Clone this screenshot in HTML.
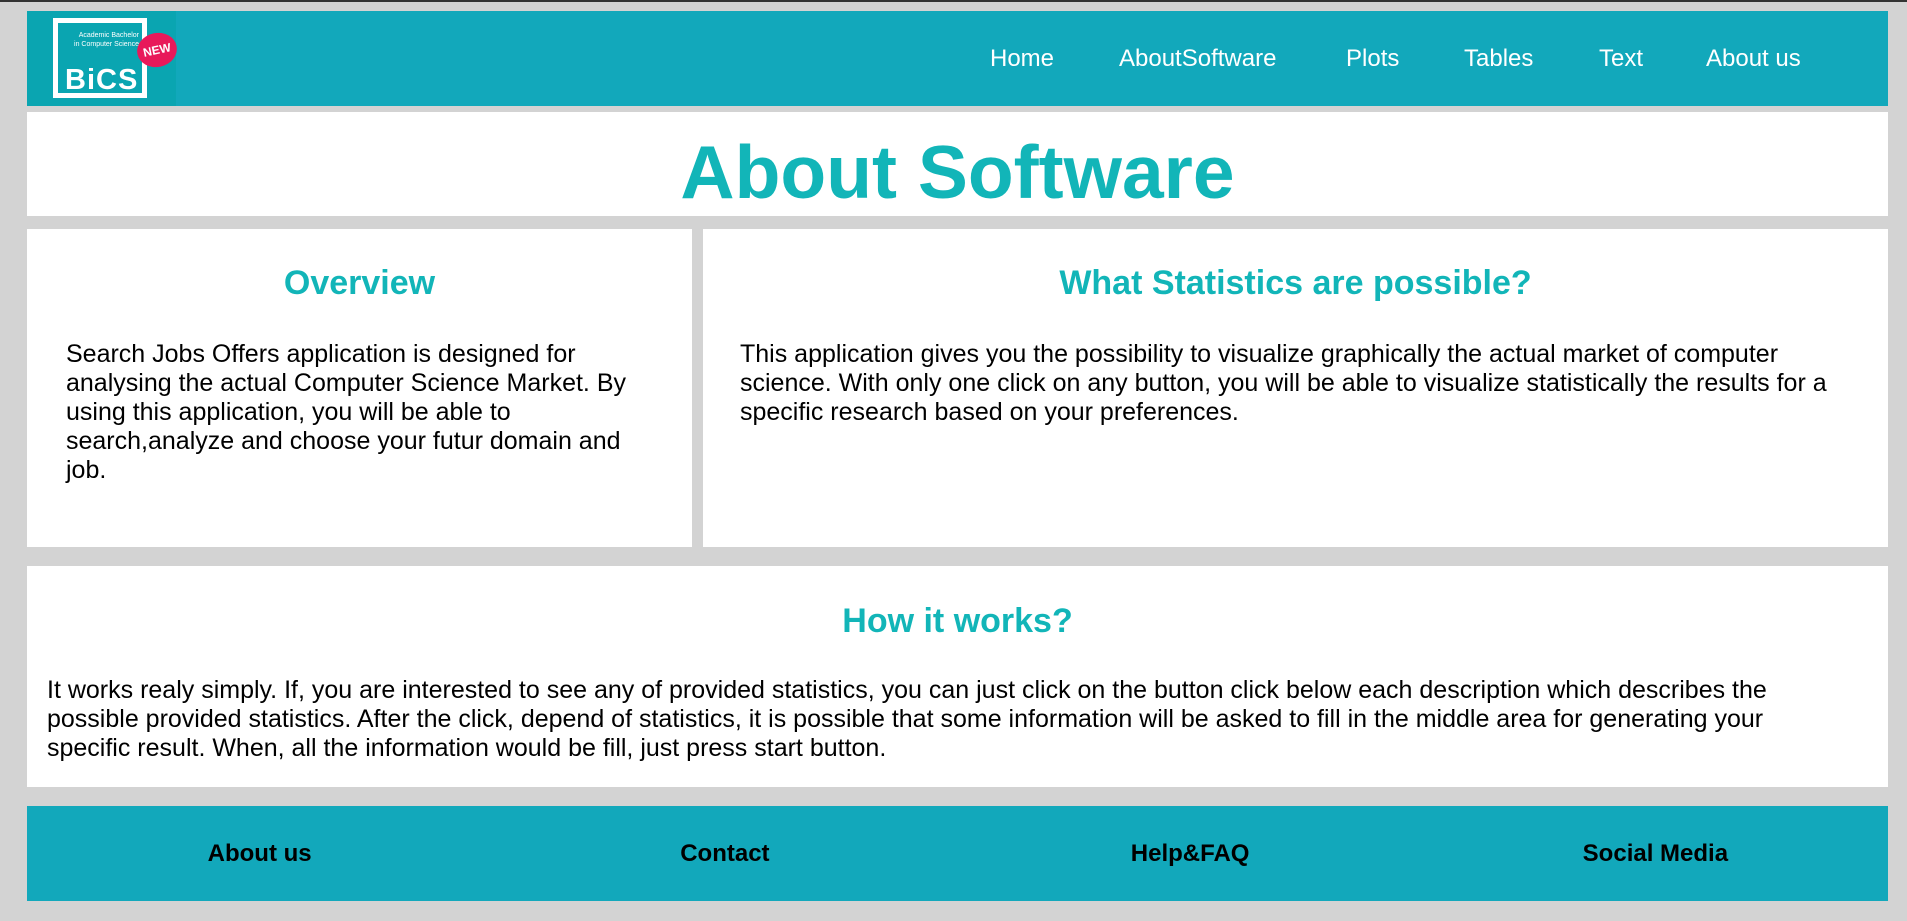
<!DOCTYPE html>
<html><head><meta charset="utf-8"><style>
*{margin:0;padding:0;box-sizing:border-box}
html,body{width:1907px;height:921px;overflow:hidden;background:#d3d3d3;font-family:"Liberation Sans",Arial,sans-serif}
body{border-top:2px solid #333}
#hdr{position:absolute;left:27px;top:11px;width:1861px;height:95px;background:#12a8bb}
#logo{position:absolute;left:0;top:0;width:149px;height:95px;background:#0aa5b1}
#logo .box{position:absolute;left:26px;top:7px;width:94px;height:80px;border:5px solid #fff}
#logo .sm{position:absolute;left:40px;top:20px;color:#fff;font-size:7px;line-height:9px;text-align:right;width:72px}
#logo .bics{position:absolute;left:38px;top:53px;color:#fff;font-weight:bold;font-size:29px;letter-spacing:1px}
#logo .new{position:absolute;left:110px;top:22px;width:40px;height:34px;border-radius:50%;background:#e8195a;color:#fff;font-weight:bold;font-size:12px;line-height:34px;text-align:center;transform:rotate(-12deg)}
nav{position:absolute;top:0;height:95px;line-height:95px;color:#fff;font-size:24px}
nav span{position:absolute;white-space:nowrap}
.w{position:absolute;background:#fff}
h1{color:#12b5b8;font-size:75px;font-weight:bold;text-align:center}
h2{color:#12b5b8;font-size:34px;font-weight:bold;text-align:center}
p{font-size:25px;line-height:29px;color:#000}
#ft{position:absolute;left:27px;top:806px;width:1861px;height:95px;background:#12a8bb;display:flex}
#ft div{flex:1;text-align:center;line-height:95px;font-weight:bold;font-size:24px;color:#000}
</style></head><body>
<div id="hdr">
 <div id="logo"><div class="box"></div><div class="sm">Academic Bachelor<br>in Computer Science</div><div class="bics">BiCS</div><div class="new">NEW</div></div>
 <nav>
  <span style="left:963px">Home</span>
  <span style="left:1092px">AboutSoftware</span>
  <span style="left:1319px">Plots</span>
  <span style="left:1437px">Tables</span>
  <span style="left:1572px">Text</span>
  <span style="left:1679px">About us</span>
 </nav>
</div>
<div class="w" style="left:27px;top:112px;width:1861px;height:104px"><h1 style="line-height:104px;margin-top:8px">About Software</h1></div>
<div class="w" style="left:27px;top:229px;width:665px;height:318px">
 <h2 style="margin-top:35px">Overview</h2>
 <p style="margin:37px 0 0 39px;width:575px">Search Jobs Offers application is designed for analysing the actual Computer Science Market. By using this application, you will be able to search,analyze and choose your futur domain and job.</p>
</div>
<div class="w" style="left:703px;top:229px;width:1185px;height:318px">
 <h2 style="margin-top:35px">What Statistics are possible?</h2>
 <p style="margin:37px 0 0 37px;width:1105px">This application gives you the possibility to visualize graphically the actual market of computer science. With only one click on any button, you will be able to visualize statistically the results for a specific research based on your preferences.</p>
</div>
<div class="w" style="left:27px;top:566px;width:1861px;height:221px">
 <h2 style="margin-top:36px">How it works?</h2>
 <p style="margin:35px 0 0 20px;width:1754px">It works realy simply. If, you are interested to see any of provided statistics, you can just click on the button click below each description which describes the possible provided statistics. After the click, depend of statistics, it is possible that some information will be asked to fill in the middle area for generating your specific result. When, all the information would be fill, just press start button.</p>
</div>
<div id="ft"><div>About us</div><div>Contact</div><div>Help&amp;FAQ</div><div>Social Media</div></div>
</body></html>
